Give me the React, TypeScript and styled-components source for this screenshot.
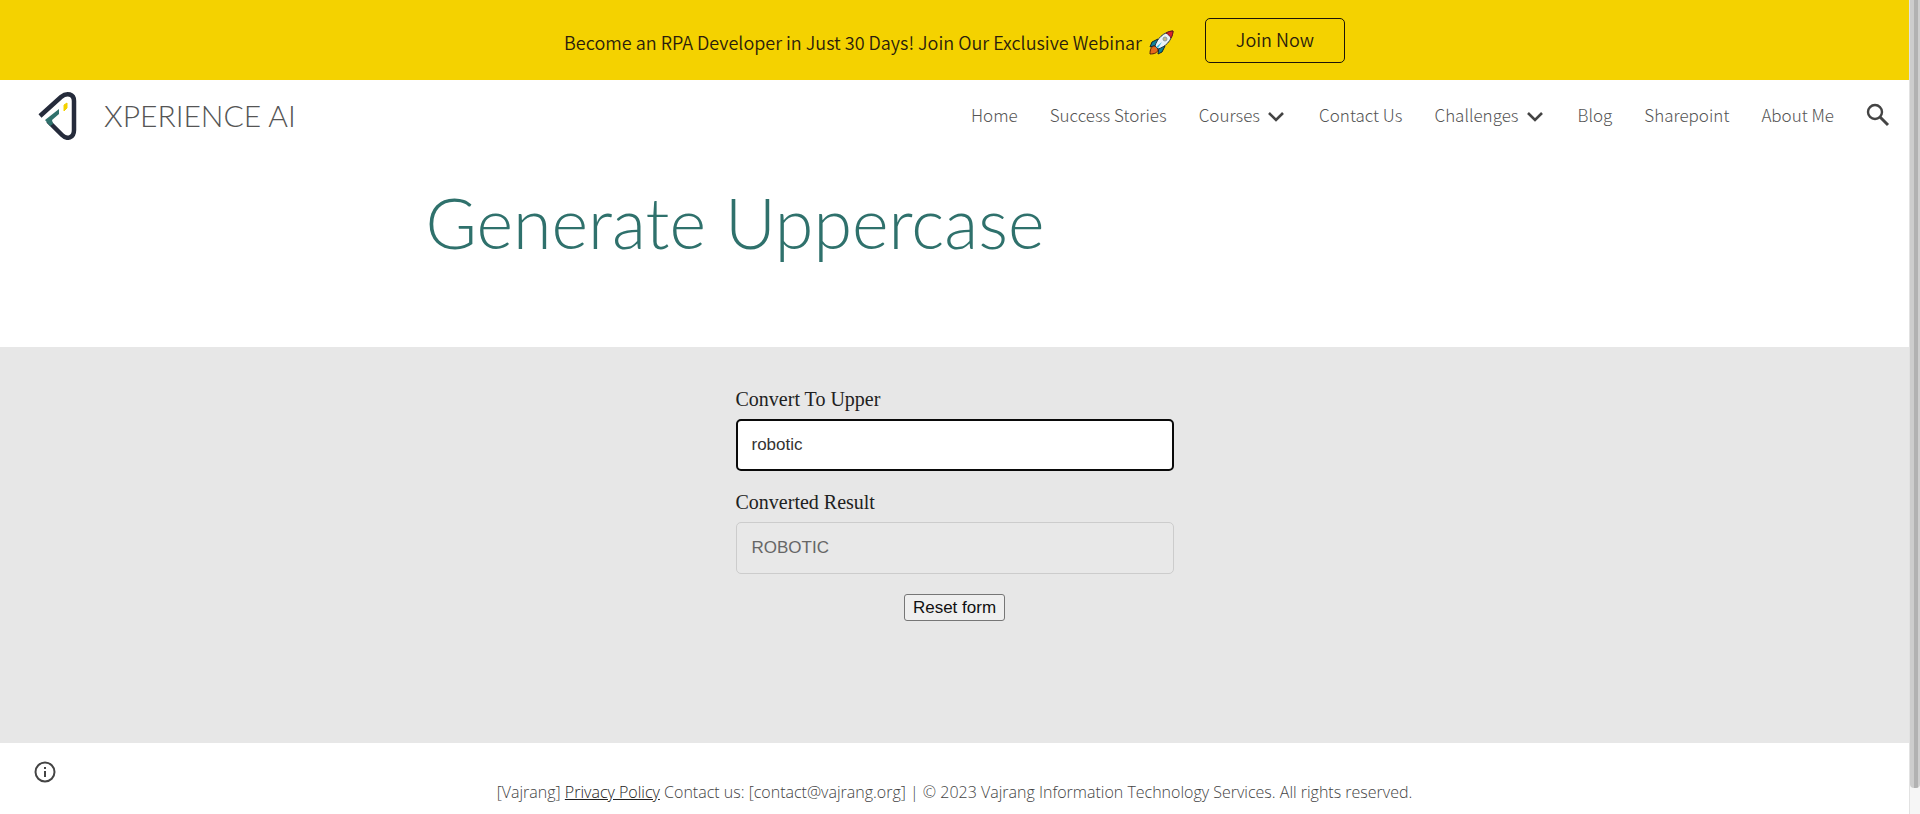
import React, { useState } from "react";
import styled, { createGlobalStyle } from "styled-components";

const sans = `"Noto Sans CJK SC", "Open Sans", sans-serif`;
const rounded = `Lato, "Open Sans", sans-serif`;

const GlobalStyle = createGlobalStyle`
  *, *::before, *::after { box-sizing: border-box; }
  body { margin: 0; background: #fff; color: #212121; font-family: ${sans}; }
`;

const Shell = styled.div`
  display: grid;
  grid-template-columns: minmax(0, 1fr) 11px;
  min-height: 100vh;
`;

const Page = styled.div`
  display: flex;
  flex-direction: column;
`;

const ScrollRail = styled.div`
  display: flex;
  padding-bottom: 26px;
  background: #f6f6f6;
  border-left: 1px solid #e2e2e2;
`;

const ScrollThumb = styled.div`
  flex: 1;
  border-radius: 0 0 4px 4px;
  background: linear-gradient(90deg, #cdcdcd 0 4px, #b2b2b2 4px 8px, #cfcfcf 8px);
`;

const Banner = styled.aside`
  display: flex;
  align-items: center;
  justify-content: center;
  gap: 30px;
  min-height: 80px;
  background: #f4d200;
`;

const BannerText = styled.p`
  display: flex;
  align-items: center;
  gap: 7px;
  margin: 3px 0 0;
  font-size: 18px;
  font-weight: 350;
  line-height: 28px;
  color: #2b1d0c;
`;

const JoinLink = styled.a`
  min-width: 140px;
  padding-bottom: 2px;
  border: 1px solid #1c1408;
  border-radius: 5px;
  font-size: 18px;
  font-weight: 350;
  line-height: 41px;
  text-align: center;
  text-decoration: none;
  color: #2b1d0c;
`;

const Header = styled.header`
  display: flex;
  align-items: center;
  justify-content: space-between;
  min-height: 70px;
  padding: 0 19px 0 36px;
`;

const Brand = styled.a`
  display: flex;
  align-items: center;
  gap: 22px;
  font-family: ${rounded};
  font-size: 30px;
  font-weight: 300;
  line-height: 40px;
  text-decoration: none;
  color: #555;
`;

const Nav = styled.nav`
  display: flex;
  align-items: center;
  gap: 32px;
`;

const NavLink = styled.a`
  font-size: 17px;
  font-weight: 300;
  line-height: 24px;
  text-decoration: none;
  color: #555;
`;

const NavGroup = styled.div`
  display: flex;
  align-items: center;
  gap: 8px;
  padding-right: 3px;
`;

const IconButton = styled.button`
  display: flex;
  padding: 0;
  border: 0;
  background: none;
  color: #444;
  cursor: pointer;
`;

const Hero = styled.section`
  flex: none;
  width: 100%;
  max-width: 1058px;
  min-height: 197px;
  margin: 0 auto;
  padding-top: 32px;
`;

const Title = styled.h1`
  margin: 0;
  font-family: ${rounded};
  font-size: 70px;
  font-weight: 300;
  line-height: 80px;
  color: #2f716c;
`;

const FormBand = styled.main`
  flex: 1;
  padding: 41px 16px;
  background: #e7e7e7;
`;

const Form = styled.form`
  display: flex;
  flex-direction: column;
  align-items: center;
  gap: 20px;
  max-width: 438px;
  margin: 0 auto;
`;

const Field = styled.div`
  display: flex;
  flex-direction: column;
  gap: 8px;
  width: 100%;
`;

const Label = styled.label`
  font-family: "Liberation Serif", serif;
  font-size: 20px;
  line-height: 23px;
`;

const TextInput = styled.input`
  width: 100%;
  height: 52px;
  padding: 0 15px;
  border: 1px solid #ccc;
  border-radius: 5px;
  outline: none;
  background: #fff;
  font-family: "Liberation Sans", sans-serif;
  font-size: 17px;
  color: #333;
  &:not(:disabled) { border: 2px solid #0a0a0a; padding: 0 14px; }
  &:disabled { background: #e8e8e8; color: #666; }
`;

const ResetButton = styled.button`
  height: 27px;
  padding: 0 8px;
  border: 1px solid #767676;
  border-radius: 3px;
  background: #efefef;
  font-family: "Liberation Sans", sans-serif;
  font-size: 17px;
  line-height: 24px;
  color: #111;
`;

const Footer = styled.footer`
  display: grid;
  grid-template-columns: 56px 1fr 56px;
  min-height: 71px;
  padding: 18px 34px 0;
`;

const FooterText = styled.p`
  margin: 19px 0 0;
  font-family: "Open Sans", sans-serif;
  font-size: 16px;
  font-weight: 300;
  line-height: 24px;
  text-align: center;
  color: #444;
  a { color: #222; }
`;

const Rocket = () => (
  <svg width="26" height="26" viewBox="0 0 26 26" aria-hidden="true">
    <path d="M9 10 3 13 1 18l7-2zM16 17l-3 6-4 2 1-7z" fill="#0c8299" stroke="#123" strokeWidth="1" />
    <path d="M6 17c-4 0-5 4-5 8 4 0 8-1 8-5z" fill="#e66a1c" stroke="#57200c" strokeWidth="1" />
    <path d="M6 17C8 10 14 3 24 2c-1 10-8 16-15 18z" fill="#eaf3f8" stroke="#253746" strokeWidth="1" />
    <path d="M17 4c2-1 4-2 7-2 0 3-1 5-2 7-1-2-3-4-5-5z" fill="#d8232a" stroke="#701419" strokeWidth="1" />
    <circle cx="16" cy="10" r="2" fill="#c7b980" stroke="#8c9aa4" />
    <path d="m7 18 6-5-4 6z" fill="#38bde0" />
  </svg>
);

const Logo = () => (
  <svg width="46" height="50" viewBox="0 0 46 50" aria-hidden="true">
    <path d="M4 26 25 7C31 2 38 4 38 11V40C38 48 31 50 26 45L12 31" fill="none" stroke="#252b3b" strokeWidth="4.500" />
    <path d="M9 30 23 19V24L16 30 17 34 14 36z" fill="#2f716c" />
    <path d="m28 15 3-2v5l-3 3z" fill="#f4d200" stroke="#f4d200" strokeLinejoin="round" />
  </svg>
);

const Chevron = () => (
  <svg width="16" height="16" viewBox="0 0 16 16" aria-hidden="true">
    <path d="m1 6 7 7 7-7" fill="none" stroke="currentColor" strokeWidth="2.600" />
  </svg>
);

const Search = () => (
  <svg width="24" height="24" viewBox="0 0 24 24" aria-hidden="true">
    <circle cx="9" cy="9" r="7" fill="none" stroke="currentColor" strokeWidth="2.400" />
    <path d="m14 14 8 8" stroke="currentColor" strokeWidth="3" />
  </svg>
);

const Info = () => (
  <svg width="22" height="22" viewBox="0 0 22 22" aria-hidden="true">
    <circle cx="11" cy="11" r="9.500" fill="none" stroke="currentColor" strokeWidth="2" />
    <path d="M11 10v6M11 6v2" stroke="currentColor" strokeWidth="2" />
  </svg>
);

const links = [
  { label: "Home", href: "#home" },
  { label: "Success Stories", href: "#stories" },
  { label: "Courses", href: "#courses", menu: true },
  { label: "Contact Us", href: "#contact" },
  { label: "Challenges", href: "#challenges", menu: true },
  { label: "Blog", href: "#blog" },
  { label: "Sharepoint", href: "#sharepoint" },
  { label: "About Me", href: "#about" },
];

export default function App() {
  const [value, setValue] = useState("robotic");
  return (
    <>
      <GlobalStyle />
      <Shell>
        <Page>
          <Banner>
            <BannerText>
              Become an RPA Developer in Just 30 Days! Join Our Exclusive Webinar
              <Rocket />
            </BannerText>
            <JoinLink href="#join">Join Now</JoinLink>
          </Banner>
          <Header>
            <Brand href="#home">
              <Logo />
              XPERIENCE AI
            </Brand>
            <Nav aria-label="Site">
              {links.map(({ label, href, menu }) =>
                menu ? (
                  <NavGroup key={label}>
                    <NavLink href={href}>{label}</NavLink>
                    <IconButton type="button" aria-label={`Expand ${label}`}>
                      <Chevron />
                    </IconButton>
                  </NavGroup>
                ) : (
                  <NavLink key={label} href={href}>{label}</NavLink>
                )
              )}
              <IconButton type="button" aria-label="Search">
                <Search />
              </IconButton>
            </Nav>
          </Header>
          <Hero>
            <Title>Generate Uppercase</Title>
          </Hero>
          <FormBand>
            <Form onSubmit={(e) => e.preventDefault()}>
              <Field>
                <Label htmlFor="source">Convert To Upper</Label>
                <TextInput id="source" value={value} onChange={(e) => setValue(e.target.value)} />
              </Field>
              <Field>
                <Label htmlFor="result">Converted Result</Label>
                <TextInput id="result" value={value.toUpperCase()} disabled />
              </Field>
              <ResetButton type="button" onClick={() => setValue("")}>Reset form</ResetButton>
            </Form>
          </FormBand>
          <Footer>
            <div>
              <IconButton type="button" aria-label="Site information">
                <Info />
              </IconButton>
            </div>
            <FooterText>
              [Vajrang] <a href="#privacy">Privacy Policy</a> Contact us: [contact@vajrang.org] | © 2023 Vajrang
              Information Technology Services. All rights reserved.
            </FooterText>
          </Footer>
        </Page>
        <ScrollRail aria-hidden="true">
          <ScrollThumb />
        </ScrollRail>
      </Shell>
    </>
  );
}
